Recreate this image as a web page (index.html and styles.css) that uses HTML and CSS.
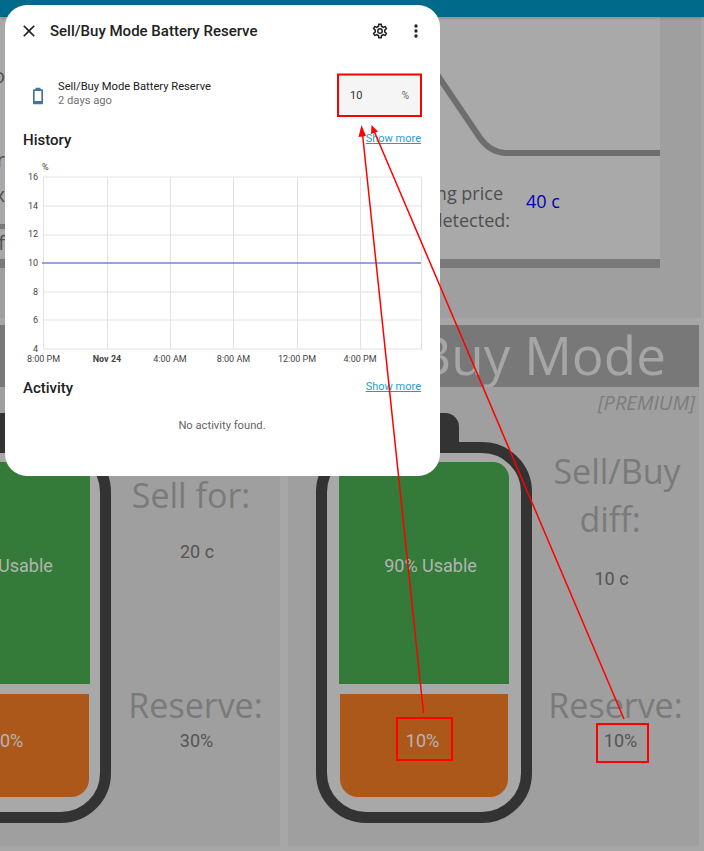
FILE: index.html
```html
<!DOCTYPE html>
<html lang="en">
<head>
<meta charset="utf-8">
<title>Sell/Buy Mode Battery Reserve</title>
<link rel="stylesheet" href="styles.css">
</head>
<body>
<div class="appbar"></div>
<main class="board">
  <section class="card top-card">
    <div class="panel">
      <div class="panel-body">
        <div class="frag">
          <span class="frag-a">Info</span>
          <span class="frag-b">Buyer</span>
          <span class="frag-c">max</span>
          <span class="frag-bar"></span>
          <span class="frag-d">off</span>
        </div>
        <div class="panel-main">
          <svg class="curve" viewBox="5 17 655 150" aria-hidden="true"><path d="M430 64L480 138Q490 152 505 153L660 153"/></svg>
          <div class="price">
            <div class="price-label"><span class="price-first">Selling price</span><span>detected:</span></div>
            <div class="price-value">40 c</div>
          </div>
        </div>
      </div>
      <div class="panel-bar"></div>
    </div>
  </section>

  <section class="card mode">
    <h2 class="mode-title title-left">Self-Consumption</h2>
    <div class="premium">&nbsp;</div>
    <div class="mode-body">
      <div class="battery battery-left">
        <div class="usable">90% Usable</div>
        <div class="reserve">30%</div>
      </div>
      <div class="side">
        <div class="side-top sell">
          <div class="side-label shift-left">Sell for:</div>
          <div class="side-value sell-value">20 c</div>
        </div>
        <div>
          <div class="side-label">Reserve:</div>
          <div class="side-value reserve-left">30%</div>
        </div>
      </div>
    </div>
  </section>

  <section class="card mode">
    <h2 class="mode-title">Sell/Buy Mode</h2>
    <div class="premium">[PREMIUM]</div>
    <div class="mode-body">
      <div class="battery">
        <div class="usable">90% Usable</div>
        <div class="reserve">10%</div>
      </div>
      <div class="side">
        <div class="side-top diff">
          <div class="side-label"><span class="label-line">Sell/Buy</span><span class="label-line diff-line">diff:</span></div>
          <div class="side-value diff-value">10 c</div>
        </div>
        <div>
          <div class="side-label">Reserve:</div>
          <div class="side-value reserve-right">10%</div>
        </div>
      </div>
    </div>
  </section>
</main>

<div class="dialog">
  <header class="dialog-head">
    <svg class="icon-close" viewBox="0 0 24 24" aria-hidden="true"><path d="M19,6.41L17.59,5L12,10.59L6.41,5L5,6.41L10.59,12L5,17.59L6.41,19L12,13.41L17.59,19L19,17.59L13.41,12L19,6.41Z"/></svg>
    <h1 class="dialog-title">Sell/Buy Mode Battery Reserve</h1>
    <svg class="icon-gear" viewBox="0 0 24 24" aria-hidden="true"><path d="M12,8A4,4 0 0,1 16,12A4,4 0 0,1 12,16A4,4 0 0,1 8,12A4,4 0 0,1 12,8M12,10A2,2 0 0,0 10,12A2,2 0 0,0 12,14A2,2 0 0,0 14,12A2,2 0 0,0 12,10M10,22C9.75,22 9.54,21.82 9.5,21.58L9.13,18.93C8.5,18.68 7.96,18.34 7.44,17.94L4.95,18.95C4.73,19.03 4.46,18.95 4.34,18.73L2.34,15.27C2.21,15.05 2.27,14.78 2.46,14.63L4.57,12.97L4.5,12L4.57,11L2.46,9.37C2.27,9.22 2.21,8.95 2.34,8.73L4.34,5.27C4.46,5.05 4.73,4.96 4.95,5.05L7.44,6.05C7.96,5.66 8.5,5.32 9.13,5.07L9.5,2.42C9.54,2.18 9.75,2 10,2H14C14.25,2 14.46,2.18 14.5,2.42L14.87,5.07C15.5,5.32 16.04,5.66 16.56,6.05L19.05,5.05C19.27,4.96 19.54,5.05 19.66,5.27L21.66,8.73C21.79,8.95 21.73,9.22 21.54,9.37L19.43,11L19.5,12L19.43,13L21.54,14.63C21.73,14.78 21.79,15.05 21.66,15.27L19.66,18.73C19.54,18.95 19.27,19.04 19.05,18.95L16.56,17.95C16.04,18.34 15.5,18.68 14.87,18.93L14.5,21.58C14.46,21.82 14.25,22 14,22H10M11.25,4L10.88,6.61C9.68,6.86 8.62,7.5 7.85,8.39L5.44,7.35L4.69,8.65L6.8,10.2C6.4,11.37 6.4,12.64 6.8,13.8L4.68,15.36L5.43,16.66L7.86,15.62C8.63,16.5 9.68,17.14 10.87,17.38L11.24,20H12.76L13.13,17.39C14.32,17.14 15.37,16.5 16.14,15.62L18.57,16.66L19.32,15.36L17.2,13.81C17.6,12.64 17.6,11.37 17.2,10.2L19.31,8.65L18.56,7.35L16.15,8.39C15.38,7.5 14.32,6.86 13.12,6.62L12.75,4H11.25Z"/></svg>
    <svg class="icon-dots" viewBox="0 0 24 24" aria-hidden="true"><path d="M12,16A2,2 0 0,1 14,18A2,2 0 0,1 12,20A2,2 0 0,1 10,18A2,2 0 0,1 12,16M12,10A2,2 0 0,1 14,12A2,2 0 0,1 12,14A2,2 0 0,1 10,12A2,2 0 0,1 12,10M12,4A2,2 0 0,1 14,6A2,2 0 0,1 12,8A2,2 0 0,1 10,6A2,2 0 0,1 12,4Z"/></svg>
  </header>

  <div class="dialog-content">
    <div class="entity">
      <svg class="icon-battery" viewBox="0 0 24 24" aria-hidden="true"><path d="M16,18H8V6H16M16.67,4H15V2H9V4H7.33A1.33,1.33 0 0,0 6,5.33V20.67C6,21.4 6.6,22 7.33,22H16.67A1.33,1.33 0 0,0 18,20.67V5.33C18,4.6 17.4,4 16.67,4Z"/></svg>
      <div class="entity-text">
        <div class="entity-name">Sell/Buy Mode Battery Reserve</div>
        <div class="entity-time">2 days ago</div>
      </div>
      <div class="number-box"><span class="number-value">10</span><span class="number-unit">%</span></div>
    </div>

    <div class="section-head history-head">
      <h3 class="section-title">History</h3>
      <a class="more">Show more</a>
    </div>

    <svg class="chart" viewBox="23 160 400 210" role="img" aria-label="History chart">
      <g class="grid-lines">
        <path d="M43.5 177H421.5M43.5 206H421.5M43.5 235H421.5M43.5 292H421.5M43.5 320H421.5M43.5 349H421.5"/>
        <path d="M43.5 177V349M107.5 177V349M170.5 177V349M233.5 177V349M297.5 177V349M360.5 177V349M421.5 177V349"/>
      </g>
      <path class="series" d="M42 263H421"/>
      <text class="unit" x="42" y="170">%</text>
      <g class="y-labels">
        <text x="38" y="180">16</text>
        <text x="38" y="209">14</text>
        <text x="38" y="237">12</text>
        <text x="38" y="266">10</text>
        <text x="38" y="295">8</text>
        <text x="38" y="323">6</text>
        <text x="38" y="352">4</text>
      </g>
      <g class="x-labels">
        <text x="43.5" y="362">8:00 PM</text>
        <text class="x-strong" x="107" y="362">Nov 24</text>
        <text x="170" y="362">4:00 AM</text>
        <text x="233.5" y="362">8:00 AM</text>
        <text x="297" y="362">12:00 PM</text>
        <text x="360" y="362">4:00 PM</text>
      </g>
    </svg>

    <div class="section-head activity-head">
      <h3 class="section-title">Activity</h3>
      <a class="more">Show more</a>
    </div>
    <p class="empty">No activity found.</p>
  </div>
</div>

<svg class="annotations" viewBox="0 0 704 851" aria-hidden="true">
  <rect x="338" y="74.5" width="83" height="41.5"/>
  <rect x="397" y="718" width="55" height="42"/>
  <rect x="597" y="724" width="51" height="38"/>
  <path class="arrow-line" d="M423.5 713L362.5 134M624 719L374.5 132"/>
  <path class="arrow-head" d="M361.5 125L358.5 137L366 136ZM371.5 125L371 134L378 131.5Z"/>
</svg>
</body>
</html>
```

FILE: styles.css
```css
* {
  box-sizing: border-box;
}

html,
body {
  margin: 0;
  height: 851px;
  overflow: hidden;
}

body {
  position: relative;
  width: 704px;
  background: #a7a7a7;
  font-family: Roboto, "Liberation Sans", sans-serif;
}

h1,
h2,
h3,
p {
  margin: 0;
}

.appbar {
  height: 17px;
  background: #006a8b;
  box-shadow: 0 1px 3px rgba(0, 0, 0, 0.2);
  position: relative;
}

.board {
  display: grid;
  grid-template-columns: 413px 411px;
  grid-template-rows: 301px 521px;
  gap: 7px 8px;
  margin-left: -133px;
}

.card {
  background: #9f9f9f;
}

.top-card {
  grid-column: 1 / span 2;
  margin-left: 133px;
  margin-right: -2px;
}

.panel {
  width: 660px;
  background: #a9a9a9;
}

.panel-body {
  display: grid;
  grid-template-columns: 5px 1fr;
  height: 242px;
}

.panel-bar {
  height: 9px;
  background: #797979;
}

.frag {
  display: flex;
  flex-direction: column;
  align-items: flex-end;
  font: 20px/28px "Open Sans", sans-serif;
  color: #4f4f4f;
  white-space: nowrap;
}

.frag-a {
  margin-top: 45px;
}

.frag-b {
  margin-top: 56px;
}

.frag-c {
  margin-top: 7px;
}

.frag-bar {
  width: 5px;
  height: 5px;
  margin-top: 15px;
  background: #797979;
}

.curve {
  display: block;
  width: 655px;
  height: 150px;
}

.curve path {
  fill: none;
  stroke: #6e6e6e;
  stroke-width: 6;
}

.price {
  display: flex;
  gap: 16px;
  margin-top: 13px;
  font-family: "Open Sans", sans-serif;
  font-size: 18px;
  line-height: 27px;
}

.price-label {
  display: flex;
  flex-direction: column;
  align-items: flex-end;
  width: 505px;
  color: #4f4f4f;
}

.price-first {
  margin-right: 7px;
}

.price-value {
  margin-top: 8px;
  color: #0000b4;
}

.mode-title {
  height: 62px;
  padding-right: 9px;
  background: #787878;
  color: #a6a6a6;
  font: 400 53px/59px "Open Sans", sans-serif;
  text-align: center;
  white-space: nowrap;
  overflow: hidden;
}

.title-left {
  direction: rtl;
  text-align: right;
  padding-right: 278px;
}

.premium {
  height: 26px;
  padding-right: 4px;
  color: #7c7c7c;
  font: italic 20px/31px "Open Sans", sans-serif;
  text-align: right;
}

.mode-body {
  display: grid;
  grid-template-columns: 216px 1fr;
  padding: 29px 0 0 28px;
}

.battery {
  position: relative;
  height: 381px;
  padding: 9px 12px 15px;
  border: 11px solid #333;
  border-radius: 50px;
  background: #a8a8a8;
  color: #b4b4b4;
  font-size: 18px;
}

.battery-left {
  padding-right: 10px;
}

.battery::before {
  content: "";
  position: absolute;
  top: -40px;
  left: 62px;
  right: 62px;
  height: 30px;
  background: #333;
  border-radius: 14px 14px 0 0;
}

.usable {
  display: flex;
  align-items: center;
  justify-content: center;
  height: 222px;
  padding: 0 0 16px 13px;
  background: #347a38;
  border-radius: 16px 16px 0 0;
}

.reserve {
  display: flex;
  align-items: center;
  justify-content: center;
  height: 103px;
  margin: 10px 1px 0;
  padding: 0 3px 11px 0;
  background: #ad581b;
  border-radius: 0 0 18px 18px;
}

.battery-left .usable {
  padding-left: 5px;
}

.battery-left .reserve {
  padding-right: 0;
  padding-left: 5px;
}

.side {
  display: grid;
  grid-template-rows: 268px auto;
  margin-top: -29px;
  text-align: center;
}

.side-top.sell {
  padding-top: 58px;
}

.side-top.diff {
  padding-top: 34px;
}

.side-label {
  color: #7a7a7a;
  font: 34px/48px "Open Sans", sans-serif;
}

.label-line {
  display: block;
  padding-left: 3px;
}

.diff-line {
  padding: 0 11px 0 0;
}

.shift-left {
  padding-right: 9px;
}

.side-value {
  color: #555;
  font-size: 18px;
  line-height: 20px;
}

.sell-value {
  margin-top: 23px;
  padding-left: 3px;
}

.diff-value {
  margin-top: 26px;
  padding-right: 8px;
}

.reserve-left {
  margin-top: 2px;
  padding-left: 2px;
}

.reserve-right {
  margin-top: 2px;
  padding-left: 10px;
}

.dialog {
  position: absolute;
  top: 5px;
  left: 5px;
  width: 435px;
  height: 471px;
  background: #fff;
  border-radius: 22px;
}

.dialog-head {
  display: flex;
  align-items: center;
  height: 52px;
  padding: 0 14px;
}

.dialog-head svg,
.icon-battery {
  flex: none;
  fill: #212121;
}

.icon-close,
.icon-dots {
  width: 20px;
  height: 20px;
}

.icon-gear {
  width: 18px;
  height: 18px;
  margin-right: 17px;
}

.dialog-title {
  flex: 1;
  margin-left: 11px;
  color: #212121;
  font-size: 15px;
  font-weight: 500;
}

.dialog-content {
  padding: 18px 19px 0 18px;
}

.entity {
  display: flex;
  align-items: center;
  height: 41px;
}

.icon-battery {
  width: 20px;
  height: 20px;
  margin: 0 10px 0 5px;
  fill: #44739e;
}

.entity-text {
  flex: 1;
  padding-bottom: 4px;
  font-size: 11.2px;
  line-height: 14px;
  color: #212121;
}

.entity-time {
  color: #727272;
}

.number-box {
  display: flex;
  align-items: center;
  justify-content: space-between;
  width: 82px;
  height: 41px;
  padding: 0 12px 0 11px;
  background: #f5f5f5;
  color: #333;
  font-size: 11px;
}

.number-unit {
  color: #666;
  font-size: 10px;
}

.section-head {
  display: flex;
  align-items: flex-start;
  justify-content: space-between;
  height: 20px;
}

.history-head {
  margin-top: 14px;
}

.activity-head {
  margin-top: 8px;
}

.section-title {
  color: #212121;
  font-size: 15px;
  font-weight: 500;
  line-height: 20px;
}

.more {
  color: #1b9fcf;
  font-size: 11px;
  line-height: 18px;
  text-decoration: underline;
}

.chart {
  display: block;
  width: 400px;
  height: 210px;
  margin-top: 10px;
}

.grid-lines path {
  fill: none;
  stroke: #e2e2e2;
  stroke-width: 1;
}

.series {
  fill: none;
  stroke: #6f86d6;
  stroke-width: 1.5;
}

.chart text {
  fill: #444;
  font-size: 9px;
}

.y-labels text {
  text-anchor: end;
}

.x-labels text {
  text-anchor: middle;
}

.chart .x-strong {
  font-weight: 700;
}

.empty {
  margin-top: 20px;
  color: #666;
  font-size: 11.2px;
  line-height: 16px;
  text-align: center;
}

.annotations {
  position: absolute;
  top: 0;
  left: 0;
  width: 704px;
  height: 851px;
  pointer-events: none;
}

.annotations rect {
  fill: none;
  stroke: #f00;
  stroke-width: 2;
}

.arrow-line {
  fill: none;
  stroke: #f00;
  stroke-width: 1.5;
}

.arrow-head {
  fill: #f00;
}
```
